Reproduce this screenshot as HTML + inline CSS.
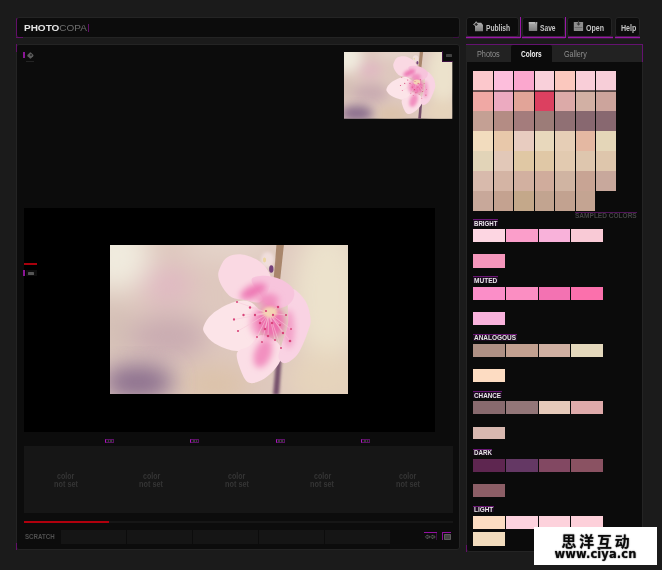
<!DOCTYPE html>
<html><head><meta charset="utf-8"><title>PHOTOCOPA</title>
<style>
html,body{margin:0;padding:0;}
body{width:662px;height:570px;background:#1b1b1b;position:relative;overflow:hidden;font-family:"Liberation Sans",sans-serif;}
div{position:absolute;box-sizing:border-box;}
.s{position:absolute;}
.lbl{left:473px;height:8px;font-size:8px;line-height:9px;font-weight:bold;color:#e8e8e8;border-top:1px solid #5a1a5e;letter-spacing:-0.2px;}
.cns{top:471px;width:60px;text-align:center;font-size:8.5px;line-height:8.4px;color:#303030;font-weight:bold;}
.mi{top:439px;width:9px;height:4px;border:1px solid #5a1264;border-left:1.5px solid #b012c2;background:#141414;}
.sb{top:530px;width:64.8px;height:13.6px;background:#151515;}
.btn{top:17px;height:20px;background:#0c0c0c;border-radius:3px;border:1px solid #242424;color:#cfcfcf;font-size:8.5px;line-height:20px;font-weight:bold;}
.tab{top:45px;height:16.5px;font-size:8.5px;line-height:17px;color:#9a9a9a;text-align:center;}
</style></head><body>
<!-- header -->
<div style="left:16px;top:17px;width:443.5px;height:20.5px;background:#0c0c0c;border-radius:3px;border:1px solid #242424;border-left:1px solid #621069;"></div>
<div style="left:16px;top:36.5px;width:7px;height:1px;background:#621069;"></div>
<div style="left:23.5px;top:21px;height:13px;font-size:9.4px;line-height:13px;font-weight:bold;color:#e4e4e4;white-space:nowrap;transform-origin:0 50%;transform:scaleX(1.065);">PHOTO<span style="color:#6f6f6f;font-weight:normal;">COPA</span></div>
<div style="left:88.2px;top:24px;width:1px;height:7.5px;background:#621069;"></div>
<div style="left:452.6px;top:37px;width:6.4px;height:1px;background:#3c0e42;"></div>
<!-- main panel -->
<div style="left:16px;top:44px;width:443.5px;height:505.5px;background:#0c0c0c;border-radius:3px;border:1px solid #242424;"></div>
<div style="left:16px;top:44px;width:1px;height:8px;background:#621069;"></div>
<div style="left:16px;top:543px;width:1px;height:6.5px;background:#621069;"></div>
<div style="left:23px;top:51.8px;width:1.8px;height:6.2px;background:#8a1596;"></div>
<div style="left:28.4px;top:52.5px;width:4.8px;height:4.8px;background:#5c5c5c;border-radius:1px;transform:rotate(45deg);"></div><div style="left:30px;top:54.1px;width:1.6px;height:1.6px;background:#333;"></div>
<div style="left:26.2px;top:61px;width:7.6px;height:1px;background:#242424;"></div>
<!-- canvas -->
<div style="left:23.5px;top:208px;width:411px;height:224px;background:#000;"></div>
<div style="left:110px;top:245px;width:238px;height:149px;"><svg width="238" height="149" viewBox="0 0 238 149" style="display:block">
<defs>
<filter id="b12" x="-50%" y="-50%" width="200%" height="200%"><feGaussianBlur stdDeviation="13"/></filter>
<filter id="b9" x="-50%" y="-50%" width="200%" height="200%"><feGaussianBlur stdDeviation="11"/></filter>
<filter id="b4" x="-50%" y="-50%" width="200%" height="200%"><feGaussianBlur stdDeviation="3"/></filter>
<filter id="b2" x="-50%" y="-50%" width="200%" height="200%"><feGaussianBlur stdDeviation="1.5"/></filter>
<filter id="b1" x="-50%" y="-50%" width="200%" height="200%"><feGaussianBlur stdDeviation="0.7"/></filter>
<clipPath id="cp"><rect x="0" y="0" width="238" height="149"/></clipPath>
<clipPath id="cTL"><path d="M109.7 23.4 C111.1 20.1 113.3 14.7 117.0 12.4 C120.7 10.1 126.5 8.8 131.8 9.4 C137.1 10.0 144.3 12.6 149.0 16.0 C153.7 19.4 158.3 24.9 160.0 29.6 C161.7 34.3 160.7 39.4 159.0 44.0 C157.3 48.6 154.0 55.2 150.0 57.0 C146.0 58.8 139.7 55.8 135.0 55.0 C130.3 54.2 125.7 54.5 122.0 52.5 C118.3 50.5 115.3 46.4 113.0 43.0 C110.7 39.6 109.0 35.3 108.4 32.0 C107.9 28.7 108.3 26.7 109.7 23.4Z"/></clipPath>
<clipPath id="cL"><path d="M93.7 81.2 C94.9 77.9 97.6 72.8 102.3 68.9 C107.0 65.0 115.8 59.8 121.9 57.8 C128.1 55.8 134.2 54.6 139.2 56.6 C144.2 58.6 150.2 65.1 152.0 70.0 C153.8 74.9 151.8 80.5 150.0 86.1 C148.2 91.6 145.3 100.0 141.0 103.3 C136.7 106.6 130.5 106.6 124.4 105.8 C118.4 105.0 109.6 101.3 104.7 98.4 C99.8 95.5 96.7 91.5 94.9 88.6 C93.1 85.7 92.5 84.5 93.7 81.2Z"/></clipPath>
<clipPath id="cB"><path d="M126.9 108.2 C128.1 103.7 135.1 104.0 139.2 101.0 C143.3 98.0 146.5 90.4 151.4 90.0 C156.3 89.6 165.3 94.6 168.6 98.4 C171.9 102.2 171.9 108.6 171.1 113.1 C170.3 117.6 167.0 121.7 163.7 125.4 C160.4 129.1 155.5 133.2 151.4 135.3 C147.3 137.4 142.5 138.9 139.2 137.7 C135.9 136.5 133.9 132.8 131.8 127.9 C129.8 123.0 125.7 112.7 126.9 108.2Z"/></clipPath>
<clipPath id="cR"><path d="M183.4 44.3 C186.3 44.4 192.8 51.7 195.7 56.6 C198.6 61.5 200.2 68.9 200.6 73.8 C201.0 78.7 200.1 80.3 198.1 86.0 C196.1 91.7 192.0 102.9 188.3 108.2 C184.6 113.5 179.3 117.2 176.0 118.0 C172.7 118.8 169.3 116.4 168.6 113.1 C167.9 109.8 170.4 104.1 172.0 98.4 C173.6 92.7 177.0 85.8 178.0 78.7 C179.0 71.6 177.1 61.7 178.0 56.0 C178.9 50.3 180.5 44.2 183.4 44.3Z"/></clipPath>
</defs>
<g clip-path="url(#cp)">
<rect width="238" height="149" fill="#dec8be"/>
<g filter="url(#b12)">
<ellipse cx="6" cy="10" rx="34" ry="36" fill="#f0ebde"/>
<ellipse cx="2" cy="85" rx="20" ry="30" fill="#d4c0b6"/>
<ellipse cx="58" cy="40" rx="26" ry="18" fill="#e0b8c2"/>
<ellipse cx="58" cy="92" rx="40" ry="22" fill="#c9abb1"/>
<ellipse cx="105" cy="140" rx="36" ry="18" fill="#dcc2a8"/>
<ellipse cx="218" cy="50" rx="36" ry="70" fill="#ece2cc"/>
<ellipse cx="215" cy="135" rx="40" ry="30" fill="#e6d4bc"/>
<ellipse cx="120" cy="0" rx="50" ry="14" fill="#e6d6cc"/>
</g>
<ellipse cx="28" cy="137" rx="36" ry="18" fill="#8c708e" filter="url(#b9)"/>
<!-- stem -->
<path d="M166.5 -1 L174 -1 L170 36 L163.5 36 Z" fill="#a9866c" filter="url(#b1)"/>
<path d="M166.8 108 L172 108 L169 150 L163 150 Z" fill="#74506a" filter="url(#b2)"/>
<ellipse cx="157.5" cy="15" rx="6.5" ry="8" fill="#f0dedc" filter="url(#b2)"/>
<ellipse cx="161.3" cy="24" rx="2.2" ry="3.8" fill="#74407a" filter="url(#b1)"/><ellipse cx="154.5" cy="15" rx="1.6" ry="2.4" fill="#ecd6a4" filter="url(#b1)"/>
<!-- petals -->
<g filter="url(#b1)">
<path d="M109.7 23.4 C111.1 20.1 113.3 14.7 117.0 12.4 C120.7 10.1 126.5 8.8 131.8 9.4 C137.1 10.0 144.3 12.6 149.0 16.0 C153.7 19.4 158.3 24.9 160.0 29.6 C161.7 34.3 160.7 39.4 159.0 44.0 C157.3 48.6 154.0 55.2 150.0 57.0 C146.0 58.8 139.7 55.8 135.0 55.0 C130.3 54.2 125.7 54.5 122.0 52.5 C118.3 50.5 115.3 46.4 113.0 43.0 C110.7 39.6 109.0 35.3 108.4 32.0 C107.9 28.7 108.3 26.7 109.7 23.4Z" fill="#fad9e3"/>
<path d="M93.7 81.2 C94.9 77.9 97.6 72.8 102.3 68.9 C107.0 65.0 115.8 59.8 121.9 57.8 C128.1 55.8 134.2 54.6 139.2 56.6 C144.2 58.6 150.2 65.1 152.0 70.0 C153.8 74.9 151.8 80.5 150.0 86.1 C148.2 91.6 145.3 100.0 141.0 103.3 C136.7 106.6 130.5 106.6 124.4 105.8 C118.4 105.0 109.6 101.3 104.7 98.4 C99.8 95.5 96.7 91.5 94.9 88.6 C93.1 85.7 92.5 84.5 93.7 81.2Z" fill="#fce4e8"/>
<path d="M126.9 108.2 C128.1 103.7 135.1 104.0 139.2 101.0 C143.3 98.0 146.5 90.4 151.4 90.0 C156.3 89.6 165.3 94.6 168.6 98.4 C171.9 102.2 171.9 108.6 171.1 113.1 C170.3 117.6 167.0 121.7 163.7 125.4 C160.4 129.1 155.5 133.2 151.4 135.3 C147.3 137.4 142.5 138.9 139.2 137.7 C135.9 136.5 133.9 132.8 131.8 127.9 C129.8 123.0 125.7 112.7 126.9 108.2Z" fill="#fbdee6"/>
<path d="M183.4 44.3 C186.3 44.4 192.8 51.7 195.7 56.6 C198.6 61.5 200.2 68.9 200.6 73.8 C201.0 78.7 200.1 80.3 198.1 86.0 C196.1 91.7 192.0 102.9 188.3 108.2 C184.6 113.5 179.3 117.2 176.0 118.0 C172.7 118.8 169.3 116.4 168.6 113.1 C167.9 109.8 170.4 104.1 172.0 98.4 C173.6 92.7 177.0 85.8 178.0 78.7 C179.0 71.6 177.1 61.7 178.0 56.0 C178.9 50.3 180.5 44.2 183.4 44.3Z" fill="#f9d3e3"/>
<path d="M141.6 34.5 C142.4 31.6 149.0 30.8 153.9 30.8 C158.8 30.8 166.2 32.2 171.1 34.5 C176.0 36.8 181.6 40.7 183.4 44.3 C185.2 47.9 184.1 52.9 182.0 56.0 C179.9 59.1 175.0 62.3 171.1 63.0 C167.2 63.7 162.5 62.5 158.8 60.0 C155.1 57.5 151.9 52.2 149.0 48.0 C146.1 43.8 140.8 37.4 141.6 34.5Z" fill="#f7c4dc"/>
</g>
<g clip-path="url(#cTL)"><ellipse cx="143" cy="47" rx="14" ry="6.5" fill="#ee7cb6" filter="url(#b4)" transform="rotate(-25 142 46)"/></g>
<g clip-path="url(#cL)"><ellipse cx="153" cy="78" rx="13" ry="16" fill="#f5a8cc" filter="url(#b4)"/></g>
<g clip-path="url(#cB)"><ellipse cx="153" cy="108" rx="8.5" ry="15" fill="#f290c0" filter="url(#b4)" transform="rotate(20 152 108)"/></g>
<g clip-path="url(#cR)"><ellipse cx="179" cy="84" rx="5.5" ry="19" fill="#f3a0c8" filter="url(#b4)"/></g>
<g filter="url(#b4)">
<ellipse cx="158" cy="55" rx="11" ry="6.5" fill="#f190c0"/>
<ellipse cx="161" cy="77" rx="13.5" ry="16" fill="#ee70ae"/>
</g>
<g stroke="#f6c8d8" stroke-width="0.7" opacity="0.8" filter="url(#b1)"><line x1="159" y1="68" x2="127" y2="57"/><line x1="159" y1="68" x2="124" y2="74.5"/><line x1="159" y1="68" x2="128" y2="86"/><line x1="159" y1="68" x2="133.5" y2="70"/><line x1="159" y1="68" x2="140" y2="62.5"/><line x1="159" y1="68" x2="147" y2="92"/><line x1="159" y1="68" x2="152" y2="97"/><line x1="159" y1="68" x2="158" y2="91"/><line x1="159" y1="68" x2="165" y2="95"/><line x1="159" y1="68" x2="171" y2="103"/><line x1="159" y1="68" x2="180" y2="96"/><line x1="159" y1="68" x2="176" y2="70"/><line x1="159" y1="68" x2="168" y2="62"/><line x1="159" y1="68" x2="156" y2="66"/><line x1="159" y1="68" x2="162" y2="78"/><line x1="159" y1="68" x2="170" y2="80"/><line x1="159" y1="68" x2="150" y2="78"/><line x1="159" y1="68" x2="155" y2="84"/><line x1="159" y1="68" x2="163" y2="70"/><line x1="159" y1="68" x2="173" y2="88"/><line x1="159" y1="68" x2="145" y2="70"/><line x1="159" y1="68" x2="181" y2="84"/></g>
<ellipse cx="160" cy="67" rx="7.5" ry="5.5" fill="#f4d4b4" filter="url(#b2)"/>
<g fill="#d9447a" filter="url(#b1)"><circle cx="127" cy="57" r="1.01"/><circle cx="124" cy="74.5" r="1.14"/><circle cx="128" cy="86" r="1.07"/><circle cx="133.5" cy="70" r="1.17"/><circle cx="140" cy="62.5" r="1.18"/><circle cx="147" cy="92" r="0.93"/><circle cx="152" cy="97" r="0.91"/><circle cx="158" cy="91" r="1.28"/><circle cx="165" cy="95" r="1.02"/><circle cx="171" cy="103" r="1.01"/><circle cx="180" cy="96" r="1.35"/><circle cx="176" cy="70" r="1.11"/><circle cx="168" cy="62" r="1.28"/><circle cx="156" cy="66" r="1.11"/><circle cx="162" cy="78" r="1.19"/><circle cx="170" cy="80" r="0.97"/><circle cx="150" cy="78" r="1.19"/><circle cx="155" cy="84" r="1.29"/><circle cx="163" cy="70" r="1.14"/><circle cx="173" cy="88" r="1.23"/><circle cx="145" cy="70" r="1.20"/><circle cx="181" cy="84" r="0.93"/></g>
</g>
</svg>
</div>
<div style="left:23.5px;top:263px;width:13.7px;height:2px;background:#a8000c;"></div>
<div style="left:23px;top:269.7px;width:2px;height:6.2px;background:#8a1596;"></div>
<div style="left:26px;top:270px;width:11px;height:6px;background:#0d0d0d;"></div>
<div style="left:28px;top:272px;width:6px;height:2.6px;background:#555;border-radius:0.5px;"></div>
<!-- thumbnail -->
<div style="left:344.4px;top:52px;width:108.3px;height:66.8px;"><svg width="108.3" height="66.8" preserveAspectRatio="none" viewBox="0 0 238 149" style="display:block">
<defs>
<filter id="tb12" x="-50%" y="-50%" width="200%" height="200%"><feGaussianBlur stdDeviation="13"/></filter>
<filter id="tb9" x="-50%" y="-50%" width="200%" height="200%"><feGaussianBlur stdDeviation="11"/></filter>
<filter id="tb4" x="-50%" y="-50%" width="200%" height="200%"><feGaussianBlur stdDeviation="3"/></filter>
<filter id="tb2" x="-50%" y="-50%" width="200%" height="200%"><feGaussianBlur stdDeviation="1.5"/></filter>
<filter id="tb1" x="-50%" y="-50%" width="200%" height="200%"><feGaussianBlur stdDeviation="0.7"/></filter>
<clipPath id="tcp"><rect x="0" y="0" width="238" height="149"/></clipPath>
<clipPath id="tcTL"><path d="M109.7 23.4 C111.1 20.1 113.3 14.7 117.0 12.4 C120.7 10.1 126.5 8.8 131.8 9.4 C137.1 10.0 144.3 12.6 149.0 16.0 C153.7 19.4 158.3 24.9 160.0 29.6 C161.7 34.3 160.7 39.4 159.0 44.0 C157.3 48.6 154.0 55.2 150.0 57.0 C146.0 58.8 139.7 55.8 135.0 55.0 C130.3 54.2 125.7 54.5 122.0 52.5 C118.3 50.5 115.3 46.4 113.0 43.0 C110.7 39.6 109.0 35.3 108.4 32.0 C107.9 28.7 108.3 26.7 109.7 23.4Z"/></clipPath>
<clipPath id="tcL"><path d="M93.7 81.2 C94.9 77.9 97.6 72.8 102.3 68.9 C107.0 65.0 115.8 59.8 121.9 57.8 C128.1 55.8 134.2 54.6 139.2 56.6 C144.2 58.6 150.2 65.1 152.0 70.0 C153.8 74.9 151.8 80.5 150.0 86.1 C148.2 91.6 145.3 100.0 141.0 103.3 C136.7 106.6 130.5 106.6 124.4 105.8 C118.4 105.0 109.6 101.3 104.7 98.4 C99.8 95.5 96.7 91.5 94.9 88.6 C93.1 85.7 92.5 84.5 93.7 81.2Z"/></clipPath>
<clipPath id="tcB"><path d="M126.9 108.2 C128.1 103.7 135.1 104.0 139.2 101.0 C143.3 98.0 146.5 90.4 151.4 90.0 C156.3 89.6 165.3 94.6 168.6 98.4 C171.9 102.2 171.9 108.6 171.1 113.1 C170.3 117.6 167.0 121.7 163.7 125.4 C160.4 129.1 155.5 133.2 151.4 135.3 C147.3 137.4 142.5 138.9 139.2 137.7 C135.9 136.5 133.9 132.8 131.8 127.9 C129.8 123.0 125.7 112.7 126.9 108.2Z"/></clipPath>
<clipPath id="tcR"><path d="M183.4 44.3 C186.3 44.4 192.8 51.7 195.7 56.6 C198.6 61.5 200.2 68.9 200.6 73.8 C201.0 78.7 200.1 80.3 198.1 86.0 C196.1 91.7 192.0 102.9 188.3 108.2 C184.6 113.5 179.3 117.2 176.0 118.0 C172.7 118.8 169.3 116.4 168.6 113.1 C167.9 109.8 170.4 104.1 172.0 98.4 C173.6 92.7 177.0 85.8 178.0 78.7 C179.0 71.6 177.1 61.7 178.0 56.0 C178.9 50.3 180.5 44.2 183.4 44.3Z"/></clipPath>
</defs>
<g clip-path="url(#tcp)">
<rect width="238" height="149" fill="#dec8be"/>
<g filter="url(#tb12)">
<ellipse cx="6" cy="10" rx="34" ry="36" fill="#f0ebde"/>
<ellipse cx="2" cy="85" rx="20" ry="30" fill="#d4c0b6"/>
<ellipse cx="58" cy="40" rx="26" ry="18" fill="#e0b8c2"/>
<ellipse cx="58" cy="92" rx="40" ry="22" fill="#c9abb1"/>
<ellipse cx="105" cy="140" rx="36" ry="18" fill="#dcc2a8"/>
<ellipse cx="218" cy="50" rx="36" ry="70" fill="#ece2cc"/>
<ellipse cx="215" cy="135" rx="40" ry="30" fill="#e6d4bc"/>
<ellipse cx="120" cy="0" rx="50" ry="14" fill="#e6d6cc"/>
</g>
<ellipse cx="28" cy="137" rx="36" ry="18" fill="#8c708e" filter="url(#tb9)"/>
<!-- stem -->
<path d="M166.5 -1 L174 -1 L170 36 L163.5 36 Z" fill="#a9866c" filter="url(#tb1)"/>
<path d="M166.8 108 L172 108 L169 150 L163 150 Z" fill="#74506a" filter="url(#tb2)"/>
<ellipse cx="157.5" cy="15" rx="6.5" ry="8" fill="#f0dedc" filter="url(#tb2)"/>
<ellipse cx="161.3" cy="24" rx="2.2" ry="3.8" fill="#74407a" filter="url(#tb1)"/><ellipse cx="154.5" cy="15" rx="1.6" ry="2.4" fill="#ecd6a4" filter="url(#tb1)"/>
<!-- petals -->
<g filter="url(#tb1)">
<path d="M109.7 23.4 C111.1 20.1 113.3 14.7 117.0 12.4 C120.7 10.1 126.5 8.8 131.8 9.4 C137.1 10.0 144.3 12.6 149.0 16.0 C153.7 19.4 158.3 24.9 160.0 29.6 C161.7 34.3 160.7 39.4 159.0 44.0 C157.3 48.6 154.0 55.2 150.0 57.0 C146.0 58.8 139.7 55.8 135.0 55.0 C130.3 54.2 125.7 54.5 122.0 52.5 C118.3 50.5 115.3 46.4 113.0 43.0 C110.7 39.6 109.0 35.3 108.4 32.0 C107.9 28.7 108.3 26.7 109.7 23.4Z" fill="#fad9e3"/>
<path d="M93.7 81.2 C94.9 77.9 97.6 72.8 102.3 68.9 C107.0 65.0 115.8 59.8 121.9 57.8 C128.1 55.8 134.2 54.6 139.2 56.6 C144.2 58.6 150.2 65.1 152.0 70.0 C153.8 74.9 151.8 80.5 150.0 86.1 C148.2 91.6 145.3 100.0 141.0 103.3 C136.7 106.6 130.5 106.6 124.4 105.8 C118.4 105.0 109.6 101.3 104.7 98.4 C99.8 95.5 96.7 91.5 94.9 88.6 C93.1 85.7 92.5 84.5 93.7 81.2Z" fill="#fce4e8"/>
<path d="M126.9 108.2 C128.1 103.7 135.1 104.0 139.2 101.0 C143.3 98.0 146.5 90.4 151.4 90.0 C156.3 89.6 165.3 94.6 168.6 98.4 C171.9 102.2 171.9 108.6 171.1 113.1 C170.3 117.6 167.0 121.7 163.7 125.4 C160.4 129.1 155.5 133.2 151.4 135.3 C147.3 137.4 142.5 138.9 139.2 137.7 C135.9 136.5 133.9 132.8 131.8 127.9 C129.8 123.0 125.7 112.7 126.9 108.2Z" fill="#fbdee6"/>
<path d="M183.4 44.3 C186.3 44.4 192.8 51.7 195.7 56.6 C198.6 61.5 200.2 68.9 200.6 73.8 C201.0 78.7 200.1 80.3 198.1 86.0 C196.1 91.7 192.0 102.9 188.3 108.2 C184.6 113.5 179.3 117.2 176.0 118.0 C172.7 118.8 169.3 116.4 168.6 113.1 C167.9 109.8 170.4 104.1 172.0 98.4 C173.6 92.7 177.0 85.8 178.0 78.7 C179.0 71.6 177.1 61.7 178.0 56.0 C178.9 50.3 180.5 44.2 183.4 44.3Z" fill="#f9d3e3"/>
<path d="M141.6 34.5 C142.4 31.6 149.0 30.8 153.9 30.8 C158.8 30.8 166.2 32.2 171.1 34.5 C176.0 36.8 181.6 40.7 183.4 44.3 C185.2 47.9 184.1 52.9 182.0 56.0 C179.9 59.1 175.0 62.3 171.1 63.0 C167.2 63.7 162.5 62.5 158.8 60.0 C155.1 57.5 151.9 52.2 149.0 48.0 C146.1 43.8 140.8 37.4 141.6 34.5Z" fill="#f7c4dc"/>
</g>
<g clip-path="url(#tcTL)"><ellipse cx="143" cy="47" rx="14" ry="6.5" fill="#ee7cb6" filter="url(#tb4)" transform="rotate(-25 142 46)"/></g>
<g clip-path="url(#tcL)"><ellipse cx="153" cy="78" rx="13" ry="16" fill="#f5a8cc" filter="url(#tb4)"/></g>
<g clip-path="url(#tcB)"><ellipse cx="153" cy="108" rx="8.5" ry="15" fill="#f290c0" filter="url(#tb4)" transform="rotate(20 152 108)"/></g>
<g clip-path="url(#tcR)"><ellipse cx="179" cy="84" rx="5.5" ry="19" fill="#f3a0c8" filter="url(#tb4)"/></g>
<g filter="url(#tb4)">
<ellipse cx="158" cy="55" rx="11" ry="6.5" fill="#f190c0"/>
<ellipse cx="161" cy="77" rx="13.5" ry="16" fill="#ee70ae"/>
</g>
<g stroke="#f6c8d8" stroke-width="0.7" opacity="0.8" filter="url(#tb1)"><line x1="159" y1="68" x2="127" y2="57"/><line x1="159" y1="68" x2="124" y2="74.5"/><line x1="159" y1="68" x2="128" y2="86"/><line x1="159" y1="68" x2="133.5" y2="70"/><line x1="159" y1="68" x2="140" y2="62.5"/><line x1="159" y1="68" x2="147" y2="92"/><line x1="159" y1="68" x2="152" y2="97"/><line x1="159" y1="68" x2="158" y2="91"/><line x1="159" y1="68" x2="165" y2="95"/><line x1="159" y1="68" x2="171" y2="103"/><line x1="159" y1="68" x2="180" y2="96"/><line x1="159" y1="68" x2="176" y2="70"/><line x1="159" y1="68" x2="168" y2="62"/><line x1="159" y1="68" x2="156" y2="66"/><line x1="159" y1="68" x2="162" y2="78"/><line x1="159" y1="68" x2="170" y2="80"/><line x1="159" y1="68" x2="150" y2="78"/><line x1="159" y1="68" x2="155" y2="84"/><line x1="159" y1="68" x2="163" y2="70"/><line x1="159" y1="68" x2="173" y2="88"/><line x1="159" y1="68" x2="145" y2="70"/><line x1="159" y1="68" x2="181" y2="84"/></g>
<ellipse cx="160" cy="67" rx="7.5" ry="5.5" fill="#f4d4b4" filter="url(#tb2)"/>
<g fill="#d9447a" filter="url(#tb1)"><circle cx="127" cy="57" r="1.01"/><circle cx="124" cy="74.5" r="1.14"/><circle cx="128" cy="86" r="1.07"/><circle cx="133.5" cy="70" r="1.17"/><circle cx="140" cy="62.5" r="1.18"/><circle cx="147" cy="92" r="0.93"/><circle cx="152" cy="97" r="0.91"/><circle cx="158" cy="91" r="1.28"/><circle cx="165" cy="95" r="1.02"/><circle cx="171" cy="103" r="1.01"/><circle cx="180" cy="96" r="1.35"/><circle cx="176" cy="70" r="1.11"/><circle cx="168" cy="62" r="1.28"/><circle cx="156" cy="66" r="1.11"/><circle cx="162" cy="78" r="1.19"/><circle cx="170" cy="80" r="0.97"/><circle cx="150" cy="78" r="1.19"/><circle cx="155" cy="84" r="1.29"/><circle cx="163" cy="70" r="1.14"/><circle cx="173" cy="88" r="1.23"/><circle cx="145" cy="70" r="1.20"/><circle cx="181" cy="84" r="0.93"/></g>
</g>
</svg>
</div>
<div style="left:441.6px;top:51px;width:11.4px;height:11px;background:#0c0c0c;border-left:1px solid #3c1042;border-bottom:1px solid #3c1042;"></div>
<div style="left:446px;top:54px;width:5.8px;height:3px;background:#424242;border-radius:0.6px;"></div>
<!-- color row -->
<div class="mi" style="left:104.9px"></div><div style="left:107.5px;top:440.2px;width:4.6px;height:1.6px;background:#3c3c3c"></div><div style="left:109.30000000000001px;top:440.2px;width:1px;height:1.6px;background:#111"></div><div class="mi" style="left:190.2px"></div><div style="left:192.79999999999998px;top:440.2px;width:4.6px;height:1.6px;background:#3c3c3c"></div><div style="left:194.6px;top:440.2px;width:1px;height:1.6px;background:#111"></div><div class="mi" style="left:275.8px"></div><div style="left:278.40000000000003px;top:440.2px;width:4.6px;height:1.6px;background:#3c3c3c"></div><div style="left:280.2px;top:440.2px;width:1px;height:1.6px;background:#111"></div><div class="mi" style="left:361.3px"></div><div style="left:363.90000000000003px;top:440.2px;width:4.6px;height:1.6px;background:#3c3c3c"></div><div style="left:365.7px;top:440.2px;width:1px;height:1.6px;background:#111"></div>
<div style="left:23.5px;top:446px;width:429px;height:67px;background:#161616;"></div>
<div style="left:56.99999999999999px;top:471.8px;height:9px;line-height:9px;font-size:8.6px;font-weight:bold;color:#353535;white-space:nowrap;transform-origin:0 50%;transform:scaleX(0.818);">color</div><div style="left:53.599999999999994px;top:479.9px;height:9px;line-height:9px;font-size:8.6px;font-weight:bold;color:#353535;white-space:nowrap;transform-origin:0 50%;transform:scaleX(0.851);">not set</div><div style="left:142.6px;top:471.8px;height:9px;line-height:9px;font-size:8.6px;font-weight:bold;color:#353535;white-space:nowrap;transform-origin:0 50%;transform:scaleX(0.818);">color</div><div style="left:139.2px;top:479.9px;height:9px;line-height:9px;font-size:8.6px;font-weight:bold;color:#353535;white-space:nowrap;transform-origin:0 50%;transform:scaleX(0.851);">not set</div><div style="left:228.20000000000002px;top:471.8px;height:9px;line-height:9px;font-size:8.6px;font-weight:bold;color:#353535;white-space:nowrap;transform-origin:0 50%;transform:scaleX(0.818);">color</div><div style="left:224.8px;top:479.9px;height:9px;line-height:9px;font-size:8.6px;font-weight:bold;color:#353535;white-space:nowrap;transform-origin:0 50%;transform:scaleX(0.851);">not set</div><div style="left:313.79999999999995px;top:471.8px;height:9px;line-height:9px;font-size:8.6px;font-weight:bold;color:#353535;white-space:nowrap;transform-origin:0 50%;transform:scaleX(0.818);">color</div><div style="left:310.4px;top:479.9px;height:9px;line-height:9px;font-size:8.6px;font-weight:bold;color:#353535;white-space:nowrap;transform-origin:0 50%;transform:scaleX(0.851);">not set</div><div style="left:399.4px;top:471.8px;height:9px;line-height:9px;font-size:8.6px;font-weight:bold;color:#353535;white-space:nowrap;transform-origin:0 50%;transform:scaleX(0.818);">color</div><div style="left:396.0px;top:479.9px;height:9px;line-height:9px;font-size:8.6px;font-weight:bold;color:#353535;white-space:nowrap;transform-origin:0 50%;transform:scaleX(0.851);">not set</div>
<div style="left:23.5px;top:521px;width:429px;height:1.6px;background:#161616;"></div>
<div style="left:23.5px;top:520.6px;width:85.5px;height:2.2px;background:#b0000d;"></div>
<div style="left:24.6px;top:532px;height:9px;line-height:9px;font-size:7.6px;font-weight:bold;color:#505050;white-space:nowrap;transform-origin:0 50%;transform:scaleX(0.809);">SCRATCH</div>
<div class="sb" style="left:61.0px"></div><div class="sb" style="left:127.1px"></div><div class="sb" style="left:193.2px"></div><div class="sb" style="left:259.3px"></div><div class="sb" style="left:325.4px"></div>
<!-- bottom right icons -->
<div style="left:424px;top:532px;width:12.6px;height:1.2px;background:#9410a2;"></div>
<div style="left:435.6px;top:533px;width:1px;height:7px;background:#3c0c44;"></div>
<svg style="position:absolute;left:424px;top:533px" width="13" height="8" viewBox="0 0 13 8">
<g fill="#111" stroke="#6a6a6a" stroke-width="0.7"><path d="M1.4 3.9 L3.4 1.9 L3.4 3 L5.6 3 L5.6 4.8 L3.4 4.8 L3.4 5.9 Z"/><path d="M6.6 3.9 L8.6 1.9 L8.6 3 L10.8 3 L10.8 4.8 L8.6 4.8 L8.6 5.9 Z"/></g>
</svg>
<div style="left:442.2px;top:532px;width:8.8px;height:1.2px;background:#9410a2;"></div>
<div style="left:442.2px;top:532px;width:1.1px;height:8px;background:#8a1098;"></div>
<div style="left:444.2px;top:534.4px;width:6.8px;height:5.2px;background:#434343;border:0.8px solid #5c5c5c;border-radius:0.8px;"></div>
<!-- top buttons -->
<div class="btn" style="left:466.4px;width:53px;"></div>
<div class="btn" style="left:522px;width:43px;"></div>
<div class="btn" style="left:567.4px;width:45px;"></div>
<div class="btn" style="left:615px;width:25.4px;"></div>
<div style="left:466.4px;top:37px;width:174px;height:1px;background:#9a16a8;"></div>
<div style="left:466.4px;top:36px;width:174px;height:1px;background:rgba(154,22,168,0.3);"></div>
<div style="left:466.4px;top:38px;width:174px;height:1px;background:rgba(154,22,168,0.22);"></div>
<div style="left:519.6px;top:36px;width:2.6px;height:3px;background:#1b1b1b;"></div>
<div style="left:565.2px;top:36px;width:2.4px;height:3px;background:#1b1b1b;"></div>
<div style="left:612.6px;top:36px;width:2.6px;height:3px;background:#1b1b1b;"></div>
<div style="left:519.6px;top:17px;width:1px;height:21px;background:#9a16a8;"></div>
<div style="left:565px;top:17px;width:1px;height:21px;background:#9a16a8;"></div>
<div style="left:485.8px;top:22.5px;height:11px;line-height:11px;font-size:8.4px;font-weight:bold;color:#c4c4c4;white-space:nowrap;transform-origin:0 50%;transform:scaleX(0.798);">Publish</div>
<div style="left:540px;top:22.5px;height:11px;line-height:11px;font-size:8.4px;font-weight:bold;color:#c4c4c4;white-space:nowrap;transform-origin:0 50%;transform:scaleX(0.795);">Save</div>
<div style="left:586.2px;top:22.5px;height:11px;line-height:11px;font-size:8.4px;font-weight:bold;color:#c4c4c4;white-space:nowrap;transform-origin:0 50%;transform:scaleX(0.839);">Open</div>
<div style="left:620.6px;top:22.5px;height:11px;line-height:11px;font-size:8.4px;font-weight:bold;color:#c4c4c4;white-space:nowrap;transform-origin:0 50%;transform:scaleX(0.846);">Help</div>
<!-- button icons -->
<svg style="position:absolute;left:472px;top:20px" width="13" height="13" viewBox="0 0 13 13">
<defs><linearGradient id="gi" x1="0" y1="0" x2="0" y2="1"><stop offset="0" stop-color="#b0b0b0"/><stop offset="1" stop-color="#7c7c7c"/></linearGradient></defs>
<path d="M3 2.8 L9.2 2.8 L11 5 L11 11.2 L3 11.2 Z" fill="url(#gi)"/>
<path d="M4.2 1.7 L5.2 3.4 L6.9 4.4 L5.2 5.4 L4.2 7.1 L3.2 5.4 L1.5 4.4 L3.2 3.4 Z" fill="#262626" stroke="#a8a8a8" stroke-width="1" stroke-linejoin="round"/>
</svg>
<svg style="position:absolute;left:527px;top:20px" width="13" height="13" viewBox="0 0 13 13">
<rect x="1.8" y="2.1" width="8.4" height="8.9" rx="0.6" fill="url(#gi)"/>
<rect x="1.8" y="2.1" width="8.4" height="1.4" fill="#bdbdbd"/>
<rect x="8.2" y="2.1" width="1" height="1.4" fill="#555"/>
</svg>
<svg style="position:absolute;left:572px;top:20px" width="13" height="13" viewBox="0 0 13 13">
<rect x="1.8" y="1.9" width="9.3" height="9.1" rx="0.6" fill="#8e8e8e"/>
<path d="M5.9 0.8 L7.1 0.8 L7.1 3.6 L8.6 3.6 L6.5 5.8 L4.4 3.6 L5.9 3.6 Z" fill="#3a3a3a"/>
<rect x="2.6" y="7" width="7.7" height="0.7" fill="#5c5c5c"/>
<rect x="3.4" y="8.8" width="6" height="0.6" fill="#777"/>
</svg>
<!-- right panel -->
<div style="left:466.4px;top:44px;width:176.2px;height:507.6px;background:#0b0b0b;border-radius:3px;border:1px solid #242424;"></div>
<div style="left:466.4px;top:45px;width:175.4px;height:16.5px;background:#222;"></div>
<div style="left:466.4px;top:44px;width:176.2px;height:1px;background:#641270;"></div>
<div style="left:641.6px;top:44px;width:1px;height:18px;background:#641270;"></div>
<div style="left:466.4px;top:545px;width:1px;height:6.6px;background:#621069;"></div>
<div style="left:510.8px;top:45px;width:41.4px;height:16.6px;background:#0b0b0b;border-radius:2px 2px 0 0;"></div>
<div style="left:476.6px;top:48.7px;height:11px;line-height:11px;font-size:8.4px;font-weight:normal;color:#8e8e8e;white-space:nowrap;transform-origin:0 50%;transform:scaleX(0.872);">Photos</div>
<div style="left:520.8px;top:48.7px;height:11px;line-height:11px;font-size:8.4px;font-weight:bold;color:#f0f0f0;white-space:nowrap;transform-origin:0 50%;transform:scaleX(0.782);">Colors</div>
<div style="left:563.6px;top:48.7px;height:11px;line-height:11px;font-size:8.4px;font-weight:normal;color:#8e8e8e;white-space:nowrap;transform-origin:0 50%;transform:scaleX(0.857);">Gallery</div>
<div class="s" style="left:473px;top:71px;width:20px;height:20px;background:#FCC8CC"></div><div class="s" style="left:494px;top:71px;width:19px;height:20px;background:#FDBEDC"></div><div class="s" style="left:514px;top:71px;width:20px;height:20px;background:#FBA7CE"></div><div class="s" style="left:535px;top:71px;width:19px;height:20px;background:#F9D0DA"></div><div class="s" style="left:555px;top:71px;width:20px;height:20px;background:#FBC8BE"></div><div class="s" style="left:576px;top:71px;width:19px;height:20px;background:#F9CED8"></div><div class="s" style="left:596px;top:71px;width:20px;height:20px;background:#F7CED8"></div><div class="s" style="left:473px;top:91px;width:20px;height:20px;background:#F0A8A4"></div><div class="s" style="left:494px;top:91px;width:19px;height:20px;background:#ECAAC0"></div><div class="s" style="left:514px;top:91px;width:20px;height:20px;background:#E2A498"></div><div class="s" style="left:535px;top:91px;width:19px;height:20px;background:#DC4060"></div><div class="s" style="left:555px;top:91px;width:20px;height:20px;background:#DCAAA8"></div><div class="s" style="left:576px;top:91px;width:19px;height:20px;background:#D2B0A4"></div><div class="s" style="left:596px;top:91px;width:20px;height:20px;background:#CCA49C"></div><div class="s" style="left:473px;top:111px;width:20px;height:20px;background:#C4A094"></div><div class="s" style="left:494px;top:111px;width:19px;height:20px;background:#B48C84"></div><div class="s" style="left:514px;top:111px;width:20px;height:20px;background:#A47C7C"></div><div class="s" style="left:535px;top:111px;width:19px;height:20px;background:#9C7C78"></div><div class="s" style="left:555px;top:111px;width:20px;height:20px;background:#907074"></div><div class="s" style="left:576px;top:111px;width:19px;height:20px;background:#886870"></div><div class="s" style="left:596px;top:111px;width:20px;height:20px;background:#886870"></div><div class="s" style="left:473px;top:131px;width:20px;height:20px;background:#F2DCBE"></div><div class="s" style="left:494px;top:131px;width:19px;height:20px;background:#E8C8AA"></div><div class="s" style="left:514px;top:131px;width:20px;height:20px;background:#E8CCC0"></div><div class="s" style="left:535px;top:131px;width:19px;height:20px;background:#E8D8BC"></div><div class="s" style="left:555px;top:131px;width:20px;height:20px;background:#E6CEB6"></div><div class="s" style="left:576px;top:131px;width:19px;height:20px;background:#E4B8A2"></div><div class="s" style="left:596px;top:131px;width:20px;height:20px;background:#E4D6B8"></div><div class="s" style="left:473px;top:151px;width:20px;height:20px;background:#E2D4B8"></div><div class="s" style="left:494px;top:151px;width:19px;height:20px;background:#E2C8B8"></div><div class="s" style="left:514px;top:151px;width:20px;height:20px;background:#E0C8A4"></div><div class="s" style="left:535px;top:151px;width:19px;height:20px;background:#E0C8A6"></div><div class="s" style="left:555px;top:151px;width:20px;height:20px;background:#E2CAB0"></div><div class="s" style="left:576px;top:151px;width:19px;height:20px;background:#DEC6AE"></div><div class="s" style="left:596px;top:151px;width:20px;height:20px;background:#DEC6AC"></div><div class="s" style="left:473px;top:171px;width:20px;height:20px;background:#D8BAAC"></div><div class="s" style="left:494px;top:171px;width:19px;height:20px;background:#D4B4A4"></div><div class="s" style="left:514px;top:171px;width:20px;height:20px;background:#D2B0A0"></div><div class="s" style="left:535px;top:171px;width:19px;height:20px;background:#D0AC9C"></div><div class="s" style="left:555px;top:171px;width:20px;height:20px;background:#D0B4A2"></div><div class="s" style="left:576px;top:171px;width:19px;height:20px;background:#C8A494"></div><div class="s" style="left:596px;top:171px;width:20px;height:20px;background:#C8A89C"></div><div class="s" style="left:473px;top:191px;width:20px;height:20.400000000000006px;background:#C8A89A"></div><div class="s" style="left:494px;top:191px;width:19px;height:20.400000000000006px;background:#C4A290"></div><div class="s" style="left:514px;top:191px;width:20px;height:20.400000000000006px;background:#C4A88A"></div><div class="s" style="left:535px;top:191px;width:19px;height:20.400000000000006px;background:#C2A490"></div><div class="s" style="left:555px;top:191px;width:20px;height:20.400000000000006px;background:#C2A290"></div><div class="s" style="left:576px;top:191px;width:19px;height:20.400000000000006px;background:#C4A492"></div><div class="s" style="left:473px;top:90px;width:143px;height:1px;background:rgba(11,11,11,0.6)"></div><div class="s" style="left:473px;top:91px;width:143px;height:1px;background:rgba(11,11,11,0.6)"></div>
<div style="left:575px;top:212px;width:62px;height:1px;background:#4e1456;"></div>
<div style="left:575px;top:210.5px;height:9px;line-height:9px;font-size:7.4px;font-weight:bold;color:#444;white-space:nowrap;transform-origin:0 50%;transform:scaleX(0.884);">SAMPLED COLORS</div>
<div class="s" style="left:473.4px;top:219.5px;width:24.6px;height:6.6px;background:#1c0a20"></div><div class="s" style="left:473.4px;top:219.4px;width:24.6px;height:1px;background:#6a1674"></div><div style="left:473.8px;top:218.7px;height:9px;line-height:9px;font-size:7.6px;font-weight:bold;color:#e6e6e6;white-space:nowrap;transform-origin:0 50%;transform:scaleX(0.803);">BRIGHT</div><div class="s" style="left:473.4px;top:228.9px;width:31.7px;height:13.6px;background:#FDD6E2"></div><div class="s" style="left:506px;top:228.9px;width:32px;height:13.6px;background:#FB9ECA"></div><div class="s" style="left:539px;top:228.9px;width:31.4px;height:13.6px;background:#F9B2DA"></div><div class="s" style="left:571.3px;top:228.9px;width:31.8px;height:13.6px;background:#F9CAD6"></div><div class="s" style="left:473.4px;top:253.9px;width:31.7px;height:13.9px;background:#F596BC"></div><div class="s" style="left:473.4px;top:276.4px;width:24.5px;height:6.6px;background:#1c0a20"></div><div class="s" style="left:473.4px;top:276.3px;width:24.5px;height:1px;background:#6a1674"></div><div style="left:473.8px;top:275.6px;height:9px;line-height:9px;font-size:7.6px;font-weight:bold;color:#e6e6e6;white-space:nowrap;transform-origin:0 50%;transform:scaleX(0.862);">MUTED</div><div class="s" style="left:473.4px;top:286.7px;width:31.7px;height:13.0px;background:#FB8EC8"></div><div class="s" style="left:506px;top:286.7px;width:32px;height:13.0px;background:#FB8EC2"></div><div class="s" style="left:539px;top:286.7px;width:31.4px;height:13.0px;background:#F372B2"></div><div class="s" style="left:571.3px;top:286.7px;width:31.8px;height:13.0px;background:#FB70AC"></div><div class="s" style="left:473.4px;top:311.9px;width:31.7px;height:13.0px;background:#F9B2DC"></div><div class="s" style="left:473.4px;top:334.1px;width:43.2px;height:6.6px;background:#1c0a20"></div><div class="s" style="left:473.4px;top:334.0px;width:43.2px;height:1px;background:#6a1674"></div><div style="left:473.8px;top:333.3px;height:9px;line-height:9px;font-size:7.6px;font-weight:bold;color:#e6e6e6;white-space:nowrap;transform-origin:0 50%;transform:scaleX(0.850);">ANALOGOUS</div><div class="s" style="left:473.4px;top:344.1px;width:31.7px;height:12.8px;background:#AE9084"></div><div class="s" style="left:506px;top:344.1px;width:32px;height:12.8px;background:#C2A090"></div><div class="s" style="left:539px;top:344.1px;width:31.4px;height:12.8px;background:#D0B0A2"></div><div class="s" style="left:571.3px;top:344.1px;width:31.8px;height:12.8px;background:#E4D8BC"></div><div class="s" style="left:473.4px;top:369.3px;width:31.7px;height:12.8px;background:#FDDCC2"></div><div class="s" style="left:473.4px;top:391.5px;width:28.3px;height:6.6px;background:#1c0a20"></div><div class="s" style="left:473.4px;top:391.4px;width:28.3px;height:1px;background:#6a1674"></div><div style="left:473.8px;top:390.7px;height:9px;line-height:9px;font-size:7.6px;font-weight:bold;color:#e6e6e6;white-space:nowrap;transform-origin:0 50%;transform:scaleX(0.834);">CHANCE</div><div class="s" style="left:473.4px;top:401.1px;width:31.7px;height:12.8px;background:#886A6E"></div><div class="s" style="left:506px;top:401.1px;width:32px;height:12.8px;background:#937678"></div><div class="s" style="left:539px;top:401.1px;width:31.4px;height:12.8px;background:#E6CABA"></div><div class="s" style="left:571.3px;top:401.1px;width:31.8px;height:12.8px;background:#DEAAAA"></div><div class="s" style="left:473.4px;top:426.7px;width:31.7px;height:12.6px;background:#D8B8B0"></div><div class="s" style="left:473.4px;top:448.6px;width:19.1px;height:6.6px;background:#1c0a20"></div><div class="s" style="left:473.4px;top:448.5px;width:19.1px;height:1px;background:#6a1674"></div><div style="left:473.8px;top:447.8px;height:9px;line-height:9px;font-size:7.6px;font-weight:bold;color:#e6e6e6;white-space:nowrap;transform-origin:0 50%;transform:scaleX(0.815);">DARK</div><div class="s" style="left:473.4px;top:458.5px;width:31.7px;height:13.3px;background:#5E2650"></div><div class="s" style="left:506px;top:458.5px;width:32px;height:13.3px;background:#643864"></div><div class="s" style="left:539px;top:458.5px;width:31.4px;height:13.3px;background:#824862"></div><div class="s" style="left:571.3px;top:458.5px;width:31.8px;height:13.3px;background:#8A5262"></div><div class="s" style="left:473.4px;top:484px;width:31.7px;height:13.1px;background:#8C5E66"></div><div class="s" style="left:473.4px;top:505.9px;width:20.5px;height:6.6px;background:#1c0a20"></div><div class="s" style="left:473.4px;top:505.8px;width:20.5px;height:1px;background:#6a1674"></div><div style="left:473.8px;top:505.1px;height:9px;line-height:9px;font-size:7.6px;font-weight:bold;color:#e6e6e6;white-space:nowrap;transform-origin:0 50%;transform:scaleX(0.847);">LIGHT</div><div class="s" style="left:473.4px;top:516.3px;width:31.7px;height:12.5px;background:#FDDCC2"></div><div class="s" style="left:506px;top:516.3px;width:32px;height:12.5px;background:#FDD2DE"></div><div class="s" style="left:539px;top:516.3px;width:31.4px;height:12.5px;background:#FDD2DC"></div><div class="s" style="left:571.3px;top:516.3px;width:31.8px;height:12.5px;background:#FDD0DA"></div><div class="s" style="left:473.4px;top:532px;width:31.7px;height:13.5px;background:#F2DCBE"></div>
<!-- watermark -->
<div style="left:534px;top:527.2px;width:123px;height:38px;background:#fff;"></div>
<div style="left:534px;top:532.4px;width:123px;height:20px;text-align:center;font-family:'Liberation Sans','Noto Sans CJK SC','WenQuanYi Zen Hei',sans-serif;font-size:14.8px;line-height:20px;font-weight:bold;color:#0a0a0a;letter-spacing:3px;padding-left:3px;transform:translateZ(0);will-change:transform;white-space:nowrap;text-shadow:0 0 1.2px #777,0 0 1.2px #777;">思洋互动</div>
<div style="left:534px;top:547.3px;width:123px;height:14px;transform:translateZ(0);will-change:transform;text-align:center;font-family:'DejaVu Sans','Liberation Sans',sans-serif;font-size:11.5px;line-height:14px;letter-spacing:0.1px;font-weight:bold;color:#0a0a0a;white-space:nowrap;text-shadow:0 0 1.2px #777,0 0 1.2px #777;">www.ciya.cn</div>
</body></html>
